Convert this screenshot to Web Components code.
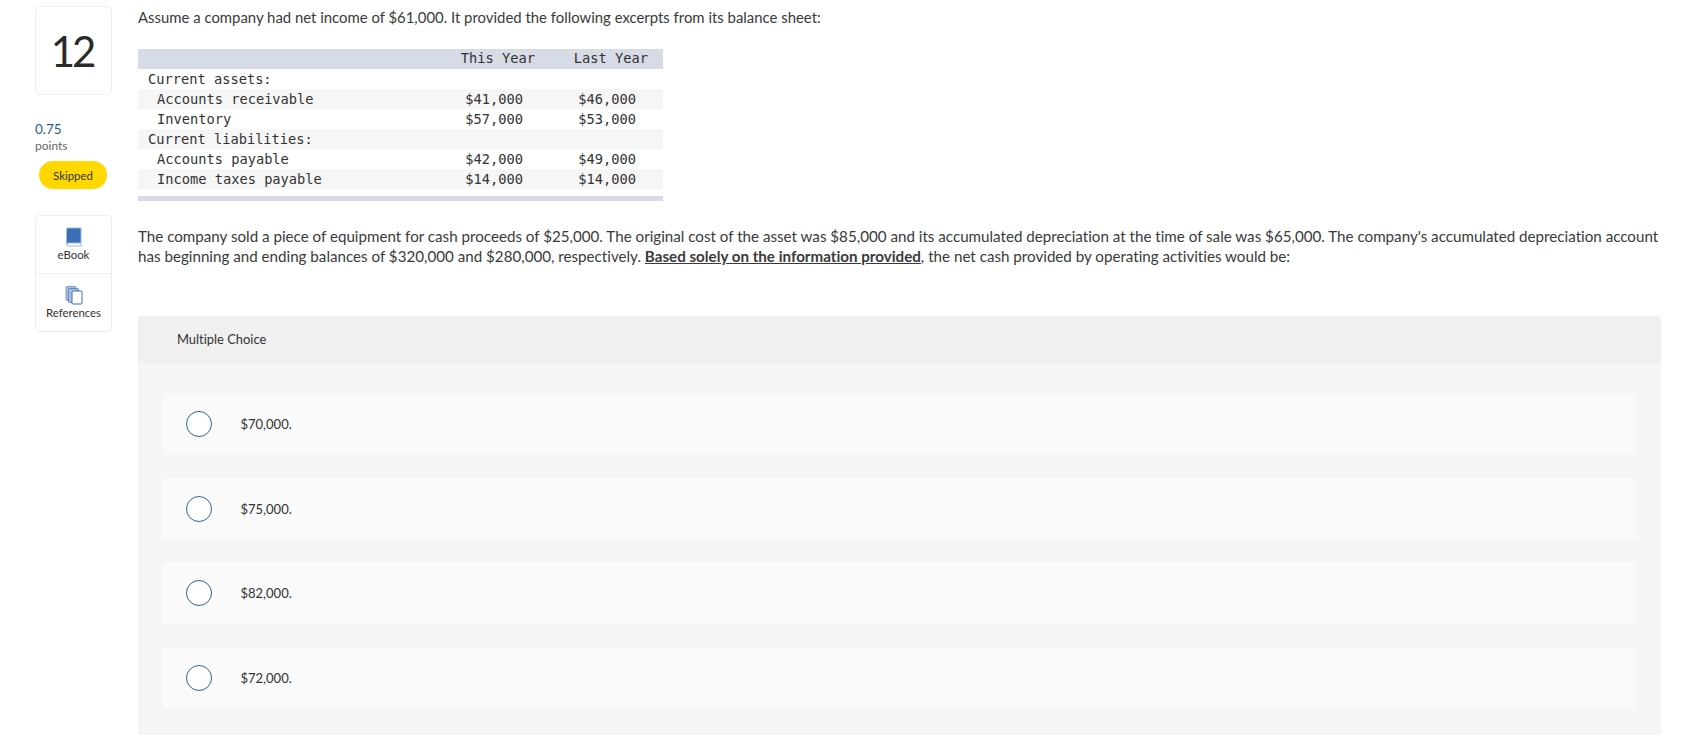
<!DOCTYPE html>
<html>
<head>
<meta charset="utf-8">
<style>
html, body { margin: 0; height: 735px; overflow: hidden; background: #fff; }
body { font-family: "Lato", "Liberation Sans", sans-serif; color: #3a3a3a; font-variant-ligatures: none; }
</style>
</head>
<body>
<question-page>
  <question-side slot="side" number="12" points="0.75" status="Skipped"></question-side>
  <balance-table></balance-table>
  <p class="q">The company sold a piece of equipment for cash proceeds of $25,000. The original cost of the asset was $85,000 and its accumulated depreciation at the time of sale was $65,000. The company's accumulated depreciation account<br>has beginning and ending balances of $320,000 and $280,000, respectively. <b><u>Based solely on the information provided</u></b>, the net cash provided by operating activities would be:</p>
  <choice-panel title="Multiple Choice">
    <choice-option>$70,000.</choice-option>
    <choice-option>$75,000.</choice-option>
    <choice-option>$82,000.</choice-option>
    <choice-option>$72,000.</choice-option>
  </choice-panel>
</question-page>
<script>
class QuestionPage extends HTMLElement
{
    constructor()
    {
        super();
        this.attachShadow({ mode: "open" });
        this.shadowRoot.innerHTML = `
        <style>
        :host { display: flex; padding: 6px 45px 0 35px; }
        .side { width: 77px; flex: none; margin-right: 26px; }
        .main { flex: 1; min-width: 0; }
        .intro { margin: 1px 0 22px; font-size: 14.9px; line-height: 20px; height: 20px; white-space: nowrap; }
        ::slotted(p.q) { margin: 25px 0 50px; font-size: 15.17px; line-height: 20px; color: #3a3a3a; white-space: nowrap; }
        ::slotted(p.q) b { font-weight: 900; color: #222; }
        </style>
        <div class="side"><slot name="side"></slot></div>
        <div class="main">
          <div class="intro">Assume a company had net income of $61,000. It provided the following excerpts from its balance sheet:</div>
          <slot></slot>
        </div>`;
    }
}

class QuestionSide extends HTMLElement
{
    constructor()
    {
        super();
        this.attachShadow({ mode: "open" });
        let num = this.getAttribute("number");
        let pts = this.getAttribute("points");
        let status = this.getAttribute("status");
        this.shadowRoot.innerHTML = `
        <style>
        :host { display: block; }
        .num { box-sizing: border-box; height: 89px; border: 1px solid #eee; border-radius: 5px;
               display: flex; align-items: center; justify-content: center; padding-right: 3px;
               font-size: 42px; color: #2a2a2a; font-weight: 400; letter-spacing: -3px; }
        .pts { margin-top: 25px; font-size: 13.5px; line-height: 18px; color: #2b5d8c; }
        .lbl { font-size: 12px; line-height: 16px; color: #666; }
        .pill { width: 68px; height: 28px; margin: 7px 0 0 4px; border-radius: 14px; background: #ffd800;
                display: flex; align-items: center; justify-content: center; font-size: 11.4px; color: #333; }
        .tools { box-sizing: border-box; height: 117px; margin-top: 26px; border: 1px solid #eee; border-radius: 4px; }
        .tool { height: 57px; box-sizing: border-box; padding-top: 11px; display: flex; flex-direction: column;
                align-items: center; font-size: 11.4px; line-height: 14px; color: #333; }
        .tool + .tool { border-top: 1px solid #eee; height: 58px; padding-top: 11px; }
        svg { display: block; margin-bottom: 1px; }
        </style>
        <div class="num">${num}</div>
        <div class="pts">${pts}</div>
        <div class="lbl">points</div>
        <div class="pill">${status}</div>
        <div class="tools">
          <div class="tool">
            <svg width="18" height="20" viewBox="0 0 18 20">
              <path d="M3 .5H16.5V19.5H3.5Q1 19.5 1 17V2.5Q1 .5 3 .5Z" fill="#9db8dd"/>
              <path d="M3 1.5H15.5V15.5H3.5Q2.6 15.5 2 16V2.5Q2 1.5 3 1.5Z" fill="#3a6fb7"/>
              <path d="M3.5 16.5H15.5V18.5H3.5Q2.2 18.5 2.2 17.5T3.5 16.5Z" fill="#fff"/>
            </svg>
            <span>eBook</span>
          </div>
          <div class="tool">
            <svg width="18" height="20" viewBox="0 0 18 20" stroke-width="1">
              <rect x="1" y="1.5" width="10" height="14" rx="1" fill="#a9c0df" stroke="#7f9fca"/>
              <rect x="3.5" y="3.5" width="10" height="14" rx="1" fill="#a9c0df" stroke="#5f88c0"/>
              <rect x="7" y="6" width="10" height="13" rx="1" fill="#fff" stroke="#3a71b8"/>
            </svg>
            <span>References</span>
          </div>
        </div>`;
    }
}

class BalanceTable extends HTMLElement
{
    constructor()
    {
        super();
        this.attachShadow({ mode: "open" });
        let rows = [
            ["Current assets:", "", "", 0, false],
            ["Accounts receivable", "$41,000", "$46,000", 1, true],
            ["Inventory", "$57,000", "$53,000", 1, false],
            ["Current liabilities:", "", "", 0, true],
            ["Accounts payable", "$42,000", "$49,000", 1, false],
            ["Income taxes payable", "$14,000", "$14,000", 1, true]
        ];
        let html = "";
        for(let ndx in rows)
        {
            let r = rows[ndx];
            html += `<div class="row ${r[4] ? "alt" : ""}">
              <span class="name ${r[3] ? "ind" : ""}">${r[0]}</span>
              <span class="a">${r[1]}</span><span class="b">${r[2]}</span></div>`;
        }
        this.shadowRoot.innerHTML = `
        <style>
        :host { display: block; width: 525px; font-family: "DejaVu Sans Mono", "Liberation Mono", monospace;
                font-size: 13.7px; color: #333; }
        .row { display: grid; grid-template-columns: 297px 100px 113px 15px; height: 20px; line-height: 20px; white-space: pre; }
        .alt { background: #f6f6f6; }
        .head { background: #d7dbe6; line-height: 18px; }
        .name { padding-left: 10px; }
        .name.ind { padding-left: 19px; }
        .a, .b { text-align: right; }
        .row:not(.head) .a { padding-right: 12px; }
        .row:not(.head) .b { padding-right: 12px; }
        .foot { height: 5px; margin-top: 7px; background: #d7dbe6; }
        </style>
        <div class="row head"><span class="name"></span><span class="a">This Year</span><span class="b">Last Year</span></div>
        ${html}
        <div class="foot"></div>`;
    }
}

class ChoicePanel extends HTMLElement
{
    constructor()
    {
        super();
        this.attachShadow({ mode: "open" });
        this.shadowRoot.innerHTML = `
        <style>
        :host { display: block; background: #f5f5f5; border-radius: 4px 4px 0 0; padding-bottom: 40px; }
        .title { height: 47px; box-sizing: border-box; padding: 0 0 2px 39px; background: #f0f0f0;
                 border-radius: 4px 4px 0 0; display: flex; align-items: center; font-size: 12.9px; color: #333; }
        .list { display: flex; flex-direction: column; gap: 22.5px; padding: 30px 26px 0 24px; }
        </style>
        <div class="title">${this.getAttribute("title")}</div>
        <div class="list"><slot></slot></div>`;
    }
}

class ChoiceOption extends HTMLElement
{
    constructor()
    {
        super();
        this.attachShadow({ mode: "open" });
        this.shadowRoot.innerHTML = `
        <style>
        :host { display: flex; align-items: center; box-sizing: border-box; height: 62px; padding-left: 24px;
                background: #fafafa; border-radius: 3px; font-size: 13px; color: #333; }
        .radio { box-sizing: border-box; width: 26px; height: 26px; border: 1.3px solid #2b6496; border-radius: 50%;
                 background: #fff; margin-right: 28.5px; flex: none; }
        </style>
        <span class="radio"></span><slot></slot>`;
    }
}

customElements.define("question-page", QuestionPage);
customElements.define("question-side", QuestionSide);
customElements.define("balance-table", BalanceTable);
customElements.define("choice-panel", ChoicePanel);
customElements.define("choice-option", ChoiceOption);
</script>
</body>
</html>
